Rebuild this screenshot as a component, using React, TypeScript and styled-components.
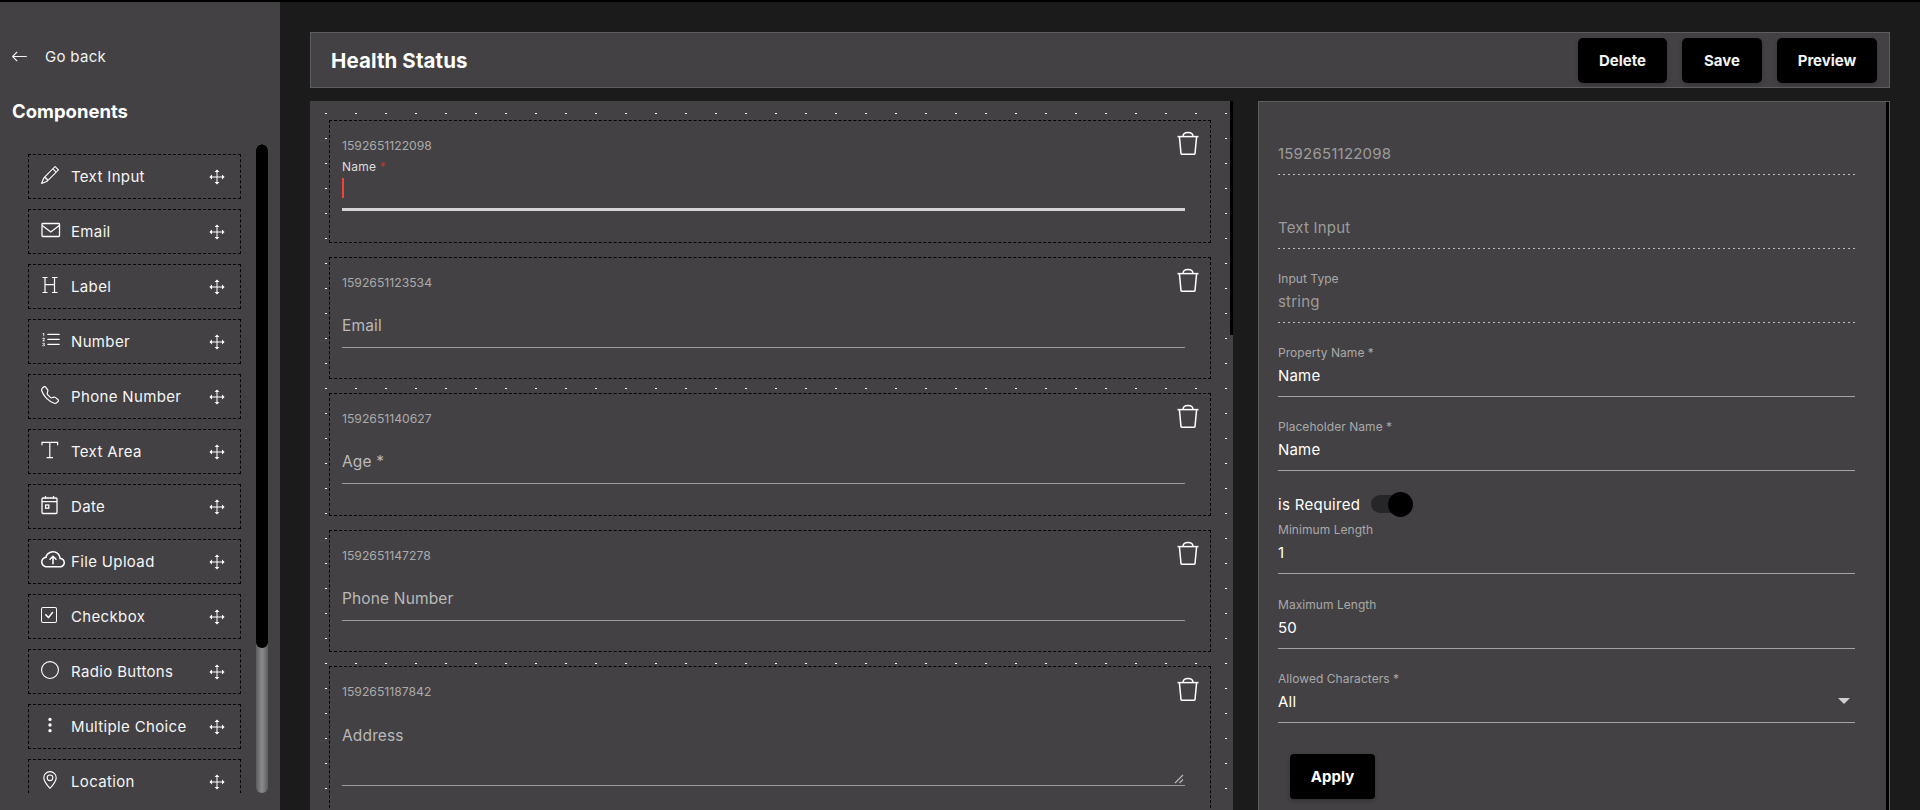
import React from "react";
import styled, { createGlobalStyle } from "styled-components";
import {
  BsArrowLeft,
  BsCheckSquare,
  BsCircle,
  BsCloudArrowUp,
  BsGeoAlt,
  BsListOl,
  BsPencil,
  BsTelephone,
  BsThreeDotsVertical,
} from "react-icons/bs";

const PANEL = "#434144";
const DARK = "#1b1b1b";
const FONT = `Inter, "Noto Sans", sans-serif`;

const GlobalStyle = createGlobalStyle`
  html, body {
    margin: 0;
    height: 100%;
    overflow: hidden;
    background: ${DARK};
    font-family: ${FONT};
    color: #fff;
  }
  * { box-sizing: border-box; }
`;

const EnvelopeIcon = () => (
  <svg width="20" height="20" viewBox="0 0 20 20" fill="none" stroke="currentColor" strokeWidth="1.3">
    <rect x="1" y="3.5" width="17.5" height="13" rx="0.8" />
    <path d="M1.2 5.5 9.8 12l8.5-6.5" />
  </svg>
);

const HeadingIcon = () => (
  <svg width="18" height="18" viewBox="0 0 18 18" fill="none" stroke="currentColor" strokeWidth="1.2">
    <path d="M4 1.5v15M13.5 1.5v15M4 8.6h9.5M1.5 1.5h5M11 1.5h5.5M1.5 16.5h5M11 16.5h5.5" />
  </svg>
);

const SerifTIcon = () => (
  <svg width="18" height="18" viewBox="0 0 18 18" fill="none" stroke="currentColor" strokeWidth="1.2">
    <path d="M1 4.2V1.4h15.6v2.8M8.8 1.4v15.2M5.6 16.6h6.4" />
  </svg>
);

const CalendarIcon = () => (
  <svg width="18" height="20" viewBox="0 0 18 20" fill="none" stroke="currentColor" strokeWidth="1.3">
    <rect x="1" y="3" width="15" height="15.5" rx="1" />
    <path d="M1 6.6h15M4.5 1v3M12.5 1v3" />
    <rect x="4.6" y="10" width="3.2" height="3.2" />
  </svg>
);

const MoveIcon = () => (
  <svg width="16" height="16" viewBox="0 0 16 16" fill="#fff" stroke="none">
    <path d="M8 .4 10.4 3H5.6zM8 15.6 5.6 13h4.8zM.4 8 3 5.6v4.8zM15.6 8 13 10.4V5.6z" />
    <path d="M7.5 2.5h1v11h-1zM2.5 7.5h11v1h-11z" />
  </svg>
);

const TrashIcon = () => (
  <svg width="22" height="24" viewBox="0 0 22 24" fill="none" stroke="#fff" strokeWidth="1.5">
    <path d="M0.5 5.6h21" />
    <path d="M2.4 5.6 4 22.6c0 .3.2.6.6.6h12.8c.4 0 .6-.3.6-.6l1.6-17" />
    <path d="M6 5.4c0-2.6 1.5-4 5-4s5 1.4 5 4" />
  </svg>
);

const ResizeIcon = () => (
  <svg width="10" height="10" viewBox="0 0 10 10" fill="none" stroke="#bbb" strokeWidth="1.1">
    <path d="M1 9 9 1M5.5 9 9 5.5" />
  </svg>
);

const components = [
  { name: "Text Input", icon: <BsPencil size={18} /> },
  { name: "Email", icon: <EnvelopeIcon /> },
  { name: "Label", icon: <HeadingIcon /> },
  { name: "Number", icon: <BsListOl size={20} /> },
  { name: "Phone Number", icon: <BsTelephone size={18} /> },
  { name: "Text Area", icon: <SerifTIcon /> },
  { name: "Date", icon: <CalendarIcon /> },
  { name: "File Upload", icon: <BsCloudArrowUp size={24} /> },
  { name: "Checkbox", icon: <BsCheckSquare size={16} /> },
  { name: "Radio Buttons", icon: <BsCircle size={18} /> },
  { name: "Multiple Choice", icon: <BsThreeDotsVertical size={18} /> },
  { name: "Location", icon: <BsGeoAlt size={18} /> },
];

const Page = styled.div`
  display: flex;
  height: 810px;
  border-top: 2px solid #000;
  overflow: hidden;
`;

const Sidebar = styled.aside`
  width: 280px;
  flex: none;
  background: ${PANEL};
  display: flex;
  flex-direction: column;
`;

const BackLink = styled.a`
  display: flex;
  align-items: center;
  gap: 17px;
  margin: 43px 0 0 11px;
  height: 22px;
  font-size: 15px;
  letter-spacing: 0.3px;
  color: #f2f2f2;
`;

const SideTitle = styled.h2`
  margin: 32px 0 0 12px;
  height: 24px;
  line-height: 24px;
  font-size: 18.5px;
  font-weight: 700;
  color: #fff;
`;

const SideBody = styled.div`
  display: flex;
  margin: 21px 0 0 28px;
  height: 649px;
  gap: 15px;
`;

const ComponentList = styled.div`
  width: 213px;
  height: 639px;
  margin-top: 10px;
  overflow: hidden;
  display: flex;
  flex-direction: column;
  gap: 10px;
`;

const ComponentItem = styled.div`
  flex: none;
  height: 45px;
  border: 1px dashed #000;
  display: flex;
  align-items: center;
  padding: 0 15px 0 12px;
  font-size: 15px;
  letter-spacing: 0.35px;
  color: #f5f5f5;
`;

const ItemIcon = styled.span`
  width: 30px;
  flex: none;
  display: flex;
  align-items: center;
  margin-top: -3px;
  color: #fff;
`;

const ItemName = styled.span`
  flex: 1;
  white-space: nowrap;
`;

const SideScroll = styled.div`
  width: 12px;
  height: 649px;
  border-radius: 6px;
  background: linear-gradient(90deg, #5d5c5e, #8b8a8c 50%, #5d5c5e);
  position: relative;
  overflow: hidden;
`;

const SideThumb = styled.div`
  position: absolute;
  top: 0;
  left: 0;
  right: 0;
  height: 504px;
  border-radius: 6px;
  background: #000;
`;

const Main = styled.main`
  flex: 1;
  min-width: 0;
  padding: 30px 30px 0;
  background: ${DARK};
  display: flex;
  flex-direction: column;
`;

const Header = styled.header`
  height: 56px;
  flex: none;
  background: ${PANEL};
  border: 1px solid #5e5d5f;
  display: flex;
  align-items: center;
  padding: 0 12px 0 20px;
  gap: 15px;
`;

const Title = styled.h1`
  flex: 1;
  margin: 0;
  font-size: 20.5px;
  font-weight: 700;
  letter-spacing: 0.1px;
  color: #fff;
`;

const ActionButton = styled.button<{ $w: number }>`
  width: ${(p) => p.$w}px;
  height: 45px;
  border: 0;
  border-radius: 5px;
  background: #000;
  color: #f2f2f2;
  font-family: ${FONT};
  font-size: 15px;
  font-weight: 700;
  box-shadow: 0 2px 4px rgba(0, 0, 0, 0.2);
`;

const Columns = styled.div`
  flex: 1;
  min-height: 0;
  display: flex;
  gap: 25px;
  margin-top: 13px;
`;

const Canvas = styled.section`
  position: relative;
  width: 923px;
  flex: none;
  overflow: hidden;
  padding: 19px 0 0 19px;
  background-color: #fff;
  background-image: linear-gradient(to right, transparent 2px, ${PANEL} 2px),
    linear-gradient(to bottom, transparent 1px, ${PANEL} 1px);
  background-size: 30px 25px;
  background-position: 15px 12px;
  display: flex;
  flex-direction: column;
  gap: 14px;
`;

const CanvasScroll = styled.div`
  position: absolute;
  top: 0;
  right: 0;
  width: 3px;
  height: 234px;
  background: #000;
`;

const Card = styled.article<{ $tall?: boolean }>`
  position: relative;
  width: 882px;
  flex: none;
  height: ${(p) => (p.$tall ? "152px" : "122.5px")};
  background: ${PANEL};
  border: 1px dashed #000;
  padding: 0 25px 0 12px;
`;

const CardId = styled.div`
  height: 38px;
  padding-top: 15px;
  line-height: 20px;
  font-size: 12.2px;
  color: #ababab;
`;

const TrashButton = styled.span`
  position: absolute;
  top: 10px;
  right: 11px;
  display: flex;
`;

const CardField = styled.div<{ $active?: boolean; $tall?: boolean }>`
  position: relative;
  height: ${(p) => (p.$tall ? "81px" : "52px")};
  display: flex;
  flex-direction: column;
  justify-content: ${(p) => (p.$tall ? "flex-start" : "flex-end")};
  padding: ${(p) => (p.$tall ? "20px" : "0")} 0 ${(p) => (p.$tall ? "0" : "10px")};
  border-bottom: ${(p) => (p.$active ? "3px solid #d4d4d4" : "1px solid #9b9a9c")};
`;

const FloatLabel = styled.label`
  line-height: 22px;
  font-size: 15.5px;
  letter-spacing: 0.15px;
  color: #b9b9b9;
`;

const SmallLabel = styled.label`
  line-height: 16px;
  margin-bottom: 3px;
  font-size: 12px;
  letter-spacing: 0.2px;
  color: #dedede;
`;

const Star = styled.span`
  color: #b23b35;
`;

const Caret = styled.span`
  width: 2px;
  height: 21px;
  background: #f44336;
`;

const ResizeHandle = styled.span`
  position: absolute;
  right: 1px;
  bottom: 1px;
  display: flex;
`;

const Props = styled.section`
  position: relative;
  flex: 1;
  min-width: 0;
  background: ${PANEL};
  border: 1px solid #5e5d5f;
  border-bottom: 0;
  padding: 40px 0 0 19px;
  overflow: hidden;
`;

const PropsScroll = styled.div`
  position: absolute;
  top: 0;
  right: 0;
  bottom: 0;
  width: 3px;
  background: #000;
`;

const PropField = styled.div<{ $top?: number }>`
  position: relative;
  width: 577px;
  margin-top: ${(p) => p.$top ?? 22}px;
  padding-bottom: 8px;
  border-bottom: 1px solid #a3a2a4;
`;

// dotted rule under the read-only fields, finer than a css dashed border
const ReadOnlyField = styled(PropField)`
  padding-bottom: 9px;
  border-bottom: 0;
  background: repeating-linear-gradient(90deg, #bdbcbe 0 2px, transparent 2px 5px) left bottom / 100% 1px no-repeat;
`;

const PropLabel = styled.div`
  height: 16px;
  line-height: 16px;
  margin-bottom: 3px;
  font-size: 12px;
  letter-spacing: 0.05px;
  color: #a9a9a9;
`;

const PropValue = styled.div<{ $muted?: boolean }>`
  height: 24px;
  line-height: 24px;
  font-size: 15px;
  letter-spacing: 0.2px;
  color: ${(p) => (p.$muted ? "#9c9c9c" : "#fff")};
`;

const SelectArrow = styled.span`
  position: absolute;
  right: 5px;
  bottom: 18px;
  border-left: 6px solid transparent;
  border-right: 6px solid transparent;
  border-top: 6px solid #cfcfcf;
`;

const RequiredRow = styled.div`
  display: flex;
  align-items: center;
  gap: 11px;
  height: 24px;
  margin: 21px 0 6px;
  font-size: 15px;
  letter-spacing: 0.3px;
  color: #fff;
`;

const Toggle = styled.span`
  position: relative;
  width: 33px;
  height: 18px;
  border-radius: 9px;
  background: #262527;
`;

const ToggleThumb = styled.span`
  position: absolute;
  top: -3.5px;
  right: -9px;
  width: 25px;
  height: 25px;
  border-radius: 50%;
  background: #000;
`;

const ApplyButton = styled.button`
  display: block;
  width: 85px;
  height: 45px;
  margin: 31px 0 0 12px;
  border: 0;
  border-radius: 4px;
  background: #000;
  color: #fff;
  font-family: ${FONT};
  font-size: 15px;
  font-weight: 700;
  box-shadow: 0 2px 4px rgba(0, 0, 0, 0.25);
`;

const fields = [
  { id: "1592651123534", label: "Email" },
  { id: "1592651140627", label: "Age *" },
  { id: "1592651147278", label: "Phone Number" },
];

const App = () => {
  return (
    <>
      <GlobalStyle />
      <Page>
        <Sidebar>
          <BackLink>
            <BsArrowLeft size={17} />
            Go back
          </BackLink>
          <SideTitle>Components</SideTitle>
          <SideBody>
            <ComponentList>
              {components.map((c) => (
                <ComponentItem key={c.name}>
                  <ItemIcon>{c.icon}</ItemIcon>
                  <ItemName>{c.name}</ItemName>
                  <MoveIcon />
                </ComponentItem>
              ))}
            </ComponentList>
            <SideScroll>
              <SideThumb />
            </SideScroll>
          </SideBody>
        </Sidebar>
        <Main>
          <Header>
            <Title>Health Status</Title>
            <ActionButton $w={89}>Delete</ActionButton>
            <ActionButton $w={80}>Save</ActionButton>
            <ActionButton $w={100}>Preview</ActionButton>
          </Header>
          <Columns>
            <Canvas>
              <CanvasScroll />
              <Card>
                <CardId>1592651122098</CardId>
                <TrashButton>
                  <TrashIcon />
                </TrashButton>
                <CardField $active>
                  <SmallLabel>
                    Name <Star>*</Star>
                  </SmallLabel>
                  <Caret />
                </CardField>
              </Card>
              {fields.map((f) => (
                <Card key={f.id}>
                  <CardId>{f.id}</CardId>
                  <TrashButton>
                    <TrashIcon />
                  </TrashButton>
                  <CardField>
                    <FloatLabel>{f.label}</FloatLabel>
                  </CardField>
                </Card>
              ))}
              <Card $tall>
                <CardId>1592651187842</CardId>
                <TrashButton>
                  <TrashIcon />
                </TrashButton>
                <CardField $tall>
                  <FloatLabel>Address</FloatLabel>
                  <ResizeHandle>
                    <ResizeIcon />
                  </ResizeHandle>
                </CardField>
              </Card>
            </Canvas>
            <Props>
              <PropsScroll />
              <ReadOnlyField $top={0}>
                <PropValue $muted>1592651122098</PropValue>
              </ReadOnlyField>
              <ReadOnlyField $top={41}>
                <PropValue $muted>Text Input</PropValue>
              </ReadOnlyField>
              <ReadOnlyField $top={22}>
                <PropLabel>Input Type</PropLabel>
                <PropValue $muted>string</PropValue>
              </ReadOnlyField>
              <PropField>
                <PropLabel>Property Name *</PropLabel>
                <PropValue>Name</PropValue>
              </PropField>
              <PropField>
                <PropLabel>Placeholder Name *</PropLabel>
                <PropValue>Name</PropValue>
              </PropField>
              <RequiredRow>
                is Required
                <Toggle>
                  <ToggleThumb />
                </Toggle>
              </RequiredRow>
              <PropField $top={1}>
                <PropLabel>Minimum Length</PropLabel>
                <PropValue>1</PropValue>
              </PropField>
              <PropField $top={23}>
                <PropLabel>Maximum Length</PropLabel>
                <PropValue>50</PropValue>
              </PropField>
              <PropField>
                <PropLabel>Allowed Characters *</PropLabel>
                <PropValue>All</PropValue>
                <SelectArrow />
              </PropField>
              <ApplyButton>Apply</ApplyButton>
            </Props>
          </Columns>
        </Main>
      </Page>
    </>
  );
};

export default App;
